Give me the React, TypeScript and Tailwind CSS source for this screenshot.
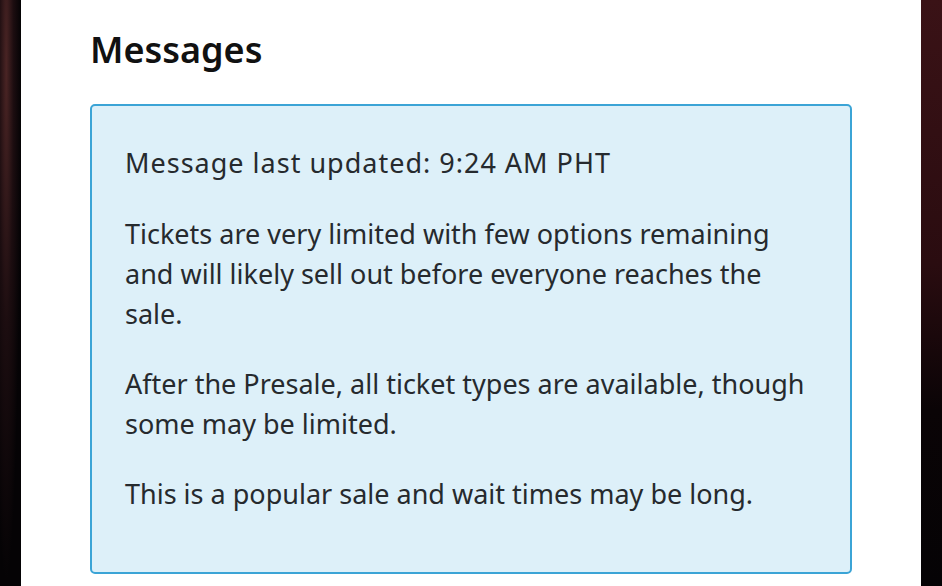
export default function App() {
  const font = { fontFamily: "'Noto Sans', 'Open Sans', sans-serif" };
  return (
    <div className="flex h-[586px] w-[942px] overflow-hidden" style={font}>
      <div className="w-[21px] shrink-0 bg-[radial-gradient(ellipse_at_30%_12%,#4a2424_0%,#1c0d10_35%,#050305_70%)]" />
      <div className="flex-1 bg-white pl-[69px] pr-[69px] pt-[30px]">
        <h1 className="text-[36px] font-semibold leading-[40px] text-[#111]">Messages</h1>
        <div className="mt-[34px] h-[470px] w-[762px] rounded-[5px] border-2 border-[#3ba4d6] bg-[#ddf0f9] px-[33px] pt-[37px] text-[27px] leading-[40px] text-[#262a2e]">
          <p className="tracking-[1px]">Message last updated: 9:24 AM PHT</p>
          <p className="mt-[31px]">Tickets are very limited with few options remaining<br />and will likely sell out before everyone reaches the<br />sale.</p>
          <p className="mt-[30px]">After the Presale, all ticket types are available, though<br />some may be limited.</p>
          <p className="mt-[30px]">This is a popular sale and wait times may be long.</p>
        </div>
      </div>
      <div className="w-[21px] shrink-0 bg-[linear-gradient(180deg,#3a1216_0%,#2a0c10_45%,#0a0406_70%,#050305_100%)]" />
    </div>
  );
}
